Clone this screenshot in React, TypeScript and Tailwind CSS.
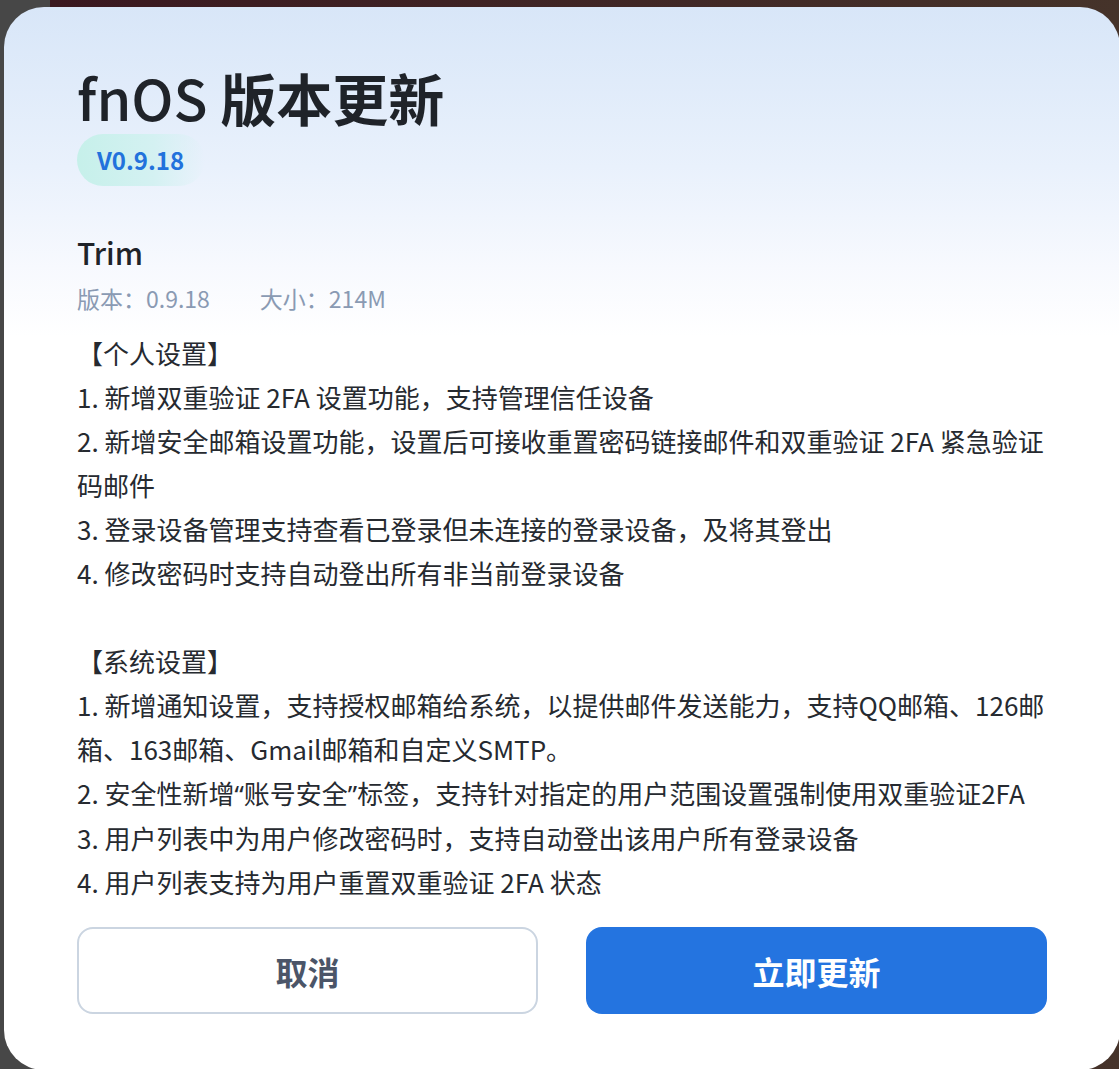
import type { ReactNode } from "react";

const q = (c: string) => <span className="font-['Noto_Sans',sans-serif]">{c}</span>;

const personal: ReactNode[] = [
  "【个人设置】",
  "1. 新增双重验证 2FA 设置功能，支持管理信任设备",
  "2. 新增安全邮箱设置功能，设置后可接收重置密码链接邮件和双重验证 2FA 紧急验证码邮件",
  "3. 登录设备管理支持查看已登录但未连接的登录设备，及将其登出",
  "4. 修改密码时支持自动登出所有非当前登录设备",
];

const system: ReactNode[] = [
  "【系统设置】",
  "1. 新增通知设置，支持授权邮箱给系统，以提供邮件发送能力，支持QQ邮箱、126邮箱、163邮箱、Gmail邮箱和自定义SMTP。",
  <>
    2. 安全性新增{q("“")}账号安全{q("”")}标签，支持针对指定的用户范围设置强制使用双重验证2FA
  </>,
  "3. 用户列表中为用户修改密码时，支持自动登出该用户所有登录设备",
  "4. 用户列表支持为用户重置双重验证 2FA 状态",
];

const font = "font-['Noto_Sans_CJK_SC',sans-serif]";

export default function App() {
  return (
    <div
      className={`h-[1069px] overflow-hidden bg-[linear-gradient(90deg,#474747_0px,#474747_50px,#3a1820_50px,#45332a_100%)] pl-[4px] pt-[7px] ${font}`}
    >
      <div className="h-[1063px] w-[1116px] rounded-[40px] bg-[linear-gradient(180deg,#d8e6f8_0px,#e9f1fc_160px,#f7f9fe_260px,#ffffff_330px)] px-[73px] pt-[58px]">
        <h1 className="text-[56px] leading-[64px] font-bold text-[#1f2329]">
          <span className="font-medium">fnOS</span> 版本更新
        </h1>
        <div className="mt-[5px] flex h-[52px] w-[128px] items-center rounded-full bg-[linear-gradient(90deg,#c6f0ea_0%,#d4f1f2_60%,rgba(240,245,253,0)_100%)] pl-[20px] text-[24px] font-bold text-[#2272dc]">
          V0.9.18
        </div>

        <div className="mt-[46px] text-[30px] leading-[40px] font-medium text-[#1f2329]">
          Trim
        </div>
        <div className="mt-[10px] flex gap-[50px] text-[23px] leading-[32px] text-[#8a9ab3]">
          <span>版本：0.9.18</span>
          <span>大小：214M</span>
        </div>

        <div className="mt-[17px] text-[26px] leading-[44px] text-[#262a30]">
          {personal.map((line, i) => (
            <p key={"p" + i}>{line}</p>
          ))}
          <p className="h-[44px]" />
          {system.map((line, i) => (
            <p key={"s" + i}>{line}</p>
          ))}
        </div>

        <div className="mt-[23px] grid grid-cols-2 gap-[48px]">
          <button className="h-[87px] rounded-[16px] border-2 border-[#cbd5e1] bg-white text-[32px] font-bold text-[#4b5568]">
            取消
          </button>
          <button className="h-[87px] rounded-[16px] bg-[#2474e0] text-[32px] font-bold text-white">
            立即更新
          </button>
        </div>
      </div>
    </div>
  );
}
